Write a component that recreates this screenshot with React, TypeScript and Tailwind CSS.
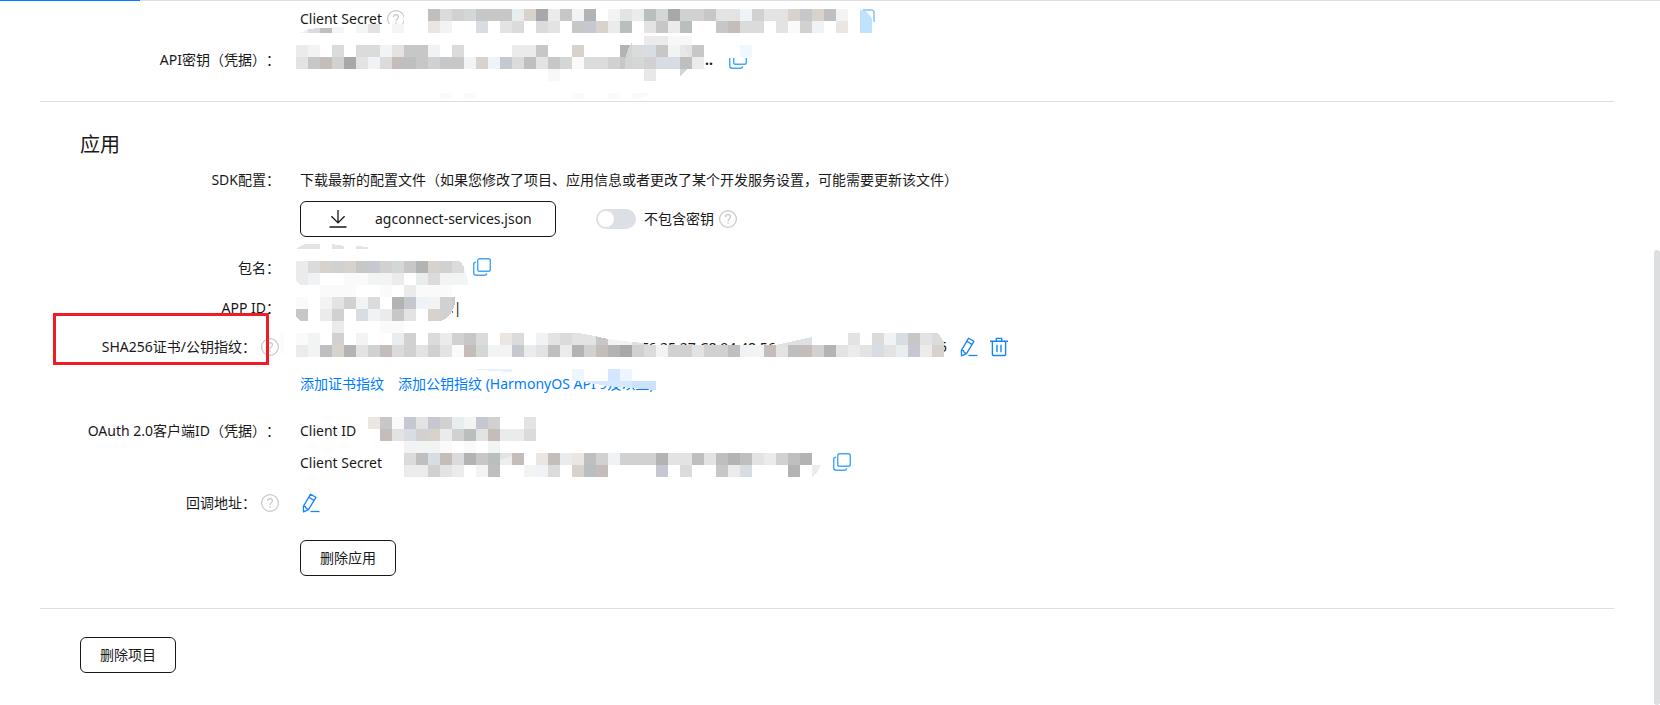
import type { ReactNode } from 'react';

const palette: Record<string, string> = {
  '0': '#fafafa',
  '1': '#f2f3f3',
  '2': '#ebebeb',
  '3': '#e3e3e4',
  '4': '#dbdbdb',
  '5': '#d1d1d1',
  '6': '#c7c7c7',
  '7': '#bfbfbf',
  '8': '#b3b3b4',
  '9': '#a8a8aa',
  b: '#f0f3f6',
  c: '#d8dce3',
  d: '#c5c8d0',
  e: '#ebe6e2',
  f: '#d8d2cd',
  g: '#c4bdb9',
  h: '#e8eded',
  i: '#d3d8d7',
  j: '#b9bebe',
};

const CELL = 12;

// Pixelated cover painted over a private value, one character per cell
function Mosaic({ rows, x, y, children }: { rows: string[]; x: number; y: number; children?: ReactNode }) {
  return (
    <svg
      aria-hidden="true"
      width="1"
      height="1"
      shapeRendering="crispEdges"
      className="pointer-events-none absolute left-0 top-0 overflow-visible"
    >
      <g transform={`translate(${x} ${y})`}>
        {rows.map((row, r) =>
          row.split('').map((c, i) =>
            c === '.' ? null : (
              <rect key={`${r}-${i}`} x={i * CELL} y={r * CELL} width={CELL} height={CELL} fill={palette[c]} />
            )
          )
        )}
        {children}
      </g>
    </svg>
  );
}

function HelpIcon() {
  return (
    <svg width="18" height="18" viewBox="0 0 18 18" fill="none" stroke="#c8c8c8" className="shrink-0">
      <circle cx="9" cy="9" r="8.4" strokeWidth="1.2" />
      <path d="M6.5 7.1c0-1.5 1-2.5 2.5-2.5s2.5 1 2.5 2.3c0 1.7-2.4 1.9-2.4 4" strokeWidth="1.2" />
      <path d="M9.1 12.3v1.4" strokeWidth="1.3" />
    </svg>
  );
}

function CopyIcon() {
  return (
    <svg width="18" height="18" viewBox="0 0 18 18" fill="none" stroke="#41a8f8" strokeWidth="1.4" className="shrink-0">
      <rect x="4.7" y="0.7" width="12.6" height="12.6" rx="1.8" />
      <path d="M3 4.2c-1.5 0-2.3.7-2.3 2v8.6c0 1.6.9 2.5 2.5 2.5h8.3c1.4 0 2.1-.7 2.1-2" />
    </svg>
  );
}

function EditIcon() {
  return (
    <svg width="18" height="20" viewBox="0 0 18 20" fill="none" stroke="#1684fc" strokeWidth="1.3" className="shrink-0">
      <path d="M8.6 1.2l5.3 3.1-7.4 12.3-5 2.3-.1-5.5z" strokeLinejoin="round" />
      <path d="M6.8 4.3l5.2 3.1M1.4 13.4l2 .3.8 1.6 2.3 1.3" />
      <path d="M8.5 18.5h9" />
    </svg>
  );
}

function TrashIcon() {
  return (
    <svg width="18" height="20" viewBox="0 0 18 20" fill="none" stroke="#1684fc" strokeWidth="1.4" className="shrink-0">
      <path d="M0 4.3h18M6.3 4V1.4h5.4V4M2.4 4.5v12.9c0 .7.4 1.1 1.1 1.1h11c.7 0 1.1-.4 1.1-1.1V4.5M7 7.8v7.4M11 7.8v7.4" />
    </svg>
  );
}

function DownloadIcon() {
  return (
    <svg width="18" height="18" viewBox="0 0 18 18" fill="none" stroke="#191919" strokeWidth="1.3" className="shrink-0">
      <path d="M9 0v13M2.4 6.3L9 12.9l6.6-6.6M.5 17h17" />
    </svg>
  );
}

function Row({
  label,
  help,
  className,
  children,
}: {
  label?: string;
  help?: boolean;
  className: string;
  children: ReactNode;
}) {
  return (
    <div className={`grid grid-cols-[200px_1fr] gap-x-5 px-10 ${className}`}>
      <div className="flex items-center justify-end gap-[5px] whitespace-nowrap">
        {label && <span>{label}</span>}
        {help && (
          <button aria-label="帮助" className="mr-px">
            <HelpIcon />
          </button>
        )}
      </div>
      <div className="relative flex items-center whitespace-nowrap">{children}</div>
    </div>
  );
}

function OutlineButton({ children }: { children: ReactNode }) {
  return (
    <button className="h-9 w-24 rounded-md border border-[#191919] bg-white text-center">{children}</button>
  );
}

export default function App() {
  return (
    <div className="flex min-h-screen flex-col overflow-hidden bg-white font-['Noto_Sans','Noto_Sans_CJK_SC',sans-serif] text-sm text-[#191919] [text-spacing-trim:space-all]">
      <div className="h-px bg-[#dfdfdf]">
        <div className="h-px w-[140px] bg-[#007dff]" />
      </div>

      <div className="flex flex-1">
        <main className="min-w-0 flex-1 px-10">
          <section className="border-b border-[#dfdfdf] pb-[18px]">
            <Row className="h-9">
              <span>Client Secret</span>
              <button aria-label="帮助" className="ml-[5px]">
                <HelpIcon />
              </button>
              <Mosaic
                x={128}
                y={8}
                rows={['745i666hf926b8.132ji955633b533f6f71', 'e1..c.34.43.6df2j.362j..6g44.305b.e']}
              >
                <path d="M-128 19h46v-4h60v9h-106z" fill="#fff" />
                <path d="M-24 0h16v16h-16z" fill="#fff" />
                <path d="M-128 24l8-4v4z" fill="#f0f0f0" />
                <path d="M-120 20l12-1v5h-12z" fill="#dbdbdc" />
                <path d="M-108 19h12v5h-12z" fill="#bfbfc1" />
                <path d="M-96 18h12v6h-12zM-72 15h12v9h-12zM-36 15h12v9h-12z" fill="#f4f5f5" />
                <path d="M-60 15h12v9h-12z" fill="#e3e3e4" />
                <path d="M432 1h12l0 23h-12z" fill="#c0e2fc" />
                <path d="M434 1h10v9q-3-7-10-9z" fill="#fff" />
                <path d="M435 1h9q2 0 2 2v10" fill="none" stroke="#41a8f8" strokeWidth="1" shapeRendering="auto" />
              </Mosaic>
            </Row>
            <Row label="API密钥（凭据）：" className="h-[46px]">
              <span className="ml-[405px] w-6 font-bold">..</span>
              <button aria-label="复制">
                <CopyIcon />
              </button>
              <Mosaic
                x={-4}
                y={8}
                rows={['21.4.441366b.4....226..f...84c6136', '36g593b4g765661fbd4736i04456i5cc72']}
              >
                <path d="M432 0h24v13h-24z" fill="#fff" />
                <path d="M444 0h12v12h-12z" fill="#eff7ff" />
                <path d="M348-9h24v9h-24z" fill="#ebebed" />
                <path d="M372-9h24v9h-24z" fill="#f7f7f6" />
                <path d="M348 24h12v12h-12z" fill="#e8e8e8" />
                <path d="M252 24h12v12h-12z" fill="#f8f8f7" />
                <path d="M384 24h7l-7 8z" fill="#d4d6d5" />
                <path d="M336-3q-8 12-7 27h7z" fill="#d3d5d5" />
                <path d="M384 0h4q4 6 4 12h-8z" fill="#e7e8e7" />
                <path d="M144 48h12v5h-12zM168 48h12v5h-12zM276 48h12v6h-12zM312 48h12v6h-12zM336 48h18q-6 5-18 6z" fill="#fafafa" />
              </Mosaic>
            </Row>
          </section>

          <section className="border-b border-[#dfdfdf] pb-8 pt-7">
            <h2 className="px-10 text-xl leading-[30px]">应用</h2>
            <Row label="SDK配置：" className="h-10">
              <p>下载最新的配置文件（如果您修改了项目、应用信息或者更改了某个开发服务设置，可能需要更新该文件）</p>
            </Row>
            <Row className="h-[38px]">
              <button className="flex h-9 w-64 items-center gap-7 rounded-md border border-[#191919] pl-7">
                <DownloadIcon />
                <span>agconnect-services.json</span>
              </button>
              <label className="ml-10 flex items-center gap-2">
                <input
                  type="checkbox"
                  role="switch"
                  className="flex h-5 w-10 appearance-none items-center rounded-full bg-[#dcdfe6] px-0.5 before:size-4 before:rounded-full before:bg-white checked:justify-end checked:bg-[#007dff]"
                />
                不包含密钥
              </label>
              <button aria-label="帮助" className="ml-[5px]">
                <HelpIcon />
              </button>
            </Row>

            <Row label="包名：" className="mt-[10px] h-10">
              <button aria-label="复制" className="mb-0.5 ml-[173px]">
                <CopyIcon />
              </button>
              <Mosaic x={-4} y={13} rows={['24f5f6d5i68f54', '2b..00112.h411', '..000..0.2000']}>
                <path d="M0-12q6-5 12-5h12v5zM36-17l12 2v3h-12zM60-15l12 1v2h-12z" fill="#e4e4e4" />
                <path d="M168 8q4 8 4 16h-4z" fill="#eff7fd" />
                <path d="M0 24v-4l4 4z" fill="#fff" />
                <path d="M164 0h4v6z" fill="#fff" />
              </Mosaic>
            </Row>
            <Row label="APP ID：" className="h-10">
              <span className="ml-[150px]">.|</span>
              <Mosaic x={-4} y={9} rows={['0.13514.8db15', '6.25.cb263.f5', '...2...00']}>
                <path d="M156 0h3v6q-1 6-3 7z" fill="#c9caca" />
                <path d="M156 14v10h-12q9-2 12-10z" fill="#fff" />
                <path d="M0 20v4h4z" fill="#fff" />
              </Mosaic>
            </Row>
            <Row label="SHA256证书/公钥指纹：" help className="h-[38px]">
              <span className="ml-[341px] w-[298px] pt-0.5">F6:25:27:C8:94:48:56</span>
              <span>5</span>
              <button aria-label="编辑" className="ml-[13px]">
                <EditIcon />
              </button>
              <button aria-label="删除" className="ml-3">
                <TrashIcon />
              </button>
              <Mosaic
                x={-4}
                y={5}
                rows={[
                  '01.5.1..h5.42564.e4.b3433611..................3.4bc634',
                  '217f835g453530gi11d237285g89541553557b1g37g58323c3hd2f',
                ]}
              >
                <path d="M282 0h66v11l-12-2-24-3-18-4z" fill="#fff" />
                <path d="M336 12v-3l12 1v2z" fill="#e0e0e0" />
                <path d="M480 12l36-8v8z" fill="#dde1e3" />
                <path d="M492 0h54v12h-30v-8l-24 5z" fill="#fff" />
                <path d="M642 0h6v9z" fill="#fff" />
                <path d="M-16 0h4v20h-4z" fill="#fafafa" />
              </Mosaic>
              <span className="pointer-events-none absolute -left-[247px] -top-[15px] h-[52px] w-[216px] border-[3px] border-[#ee1c25]" />
            </Row>
            <Row className="h-9">
              <a href="#cert" className="text-[#007dff]">
                添加证书指纹
              </a>
              <a href="#key" className="ml-[14px] text-[#007dff]">
                添加公钥指纹 (HarmonyOS API 9及以上)
              </a>
              <Mosaic x={-4} y={3} rows={[]}>
                <path d="M276 0h92v20h-26l-26-3-16-3-24-3z" fill="#fff" />
                <path d="M176 0h40v3q-24-1-40-3z" fill="#e6f1fe" />
                <path d="M276 0h12v12h-12zM324 0h12v12h-12z" fill="#edf5fe" />
                <path d="M312 0h12v12h-12z" fill="#d3e6fd" />
                <path d="M288 12h48v7l-24-2-24-4z" fill="#d6e8fd" />
                <path d="M336 12h24v9l-24-2z" fill="#cbe1fc" />
              </Mosaic>
            </Row>

            <Row label="OAuth 2.0客户端ID（凭据）：" className="mt-[13px] h-8">
              <span>Client ID</span>
              <Mosaic x={68} y={2} rows={['e60d3d5h1d5..3', '.g3c5f25j3g224', '...1110.0.1']} />
            </Row>
            <Row className="h-8">
              <span className="w-[533px]">Client Secret</span>
              <button aria-label="复制" className="mb-0.5">
                <CopyIcon />
              </button>
              <Mosaic
                x={104}
                y={6}
                rows={['47cg486j3g.eg2e75b5558337378732578', '22532.17..1b4.fjg....d.4..62c...8']}
              >
                <path d="M408 12h9q-3 8-9 12z" fill="#ebebeb" />
                <path d="M96 7l12-4v9h-12z" fill="#eeeeed" />
              </Mosaic>
            </Row>
            <Row label="回调地址：" help className="mt-1 h-10">
              <button aria-label="编辑" className="ml-0.5">
                <EditIcon />
              </button>
            </Row>
            <Row className="mt-[17px]">
              <OutlineButton>删除应用</OutlineButton>
            </Row>
          </section>

          <div className="px-10 py-7">
            <OutlineButton>删除项目</OutlineButton>
          </div>
        </main>

        <div className="flex w-1.5 flex-col pt-[249px]">
          <div className="flex-1 rounded-full bg-[#dcdee0]" />
        </div>
      </div>
    </div>
  );
}
